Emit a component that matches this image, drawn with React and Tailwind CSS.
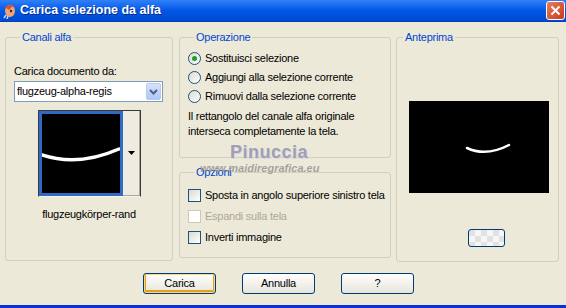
import React from 'react';

const Radio = ({ checked, label }) => (
  <div className="flex items-center h-[19px] gap-[4px]">
    <span className="w-[13px] h-[13px] rounded-full border border-[#1C5180] bg-gradient-to-br from-[#DCD9CF] to-white flex items-center justify-center">
      {checked && <span className="w-[5px] h-[5px] rounded-full bg-[#21A121]" />}
    </span>
    <span className="whitespace-nowrap">{label}</span>
  </div>
);

const Check = ({ label, disabled }) => (
  <div className="flex items-center h-[21px] gap-[4px]">
    <span
      className={`shrink-0 w-[13px] h-[13px] border ${
        disabled ? 'border-[#CAC8BB] bg-white' : 'border-[#1C5180] bg-gradient-to-br from-[#DCD9CF] to-white'
      }`}
    />
    <span className={`whitespace-nowrap ${disabled ? 'text-[#ACA899]' : ''}`}>{label}</span>
  </div>
);

const XpButton = ({ children, isDefault }) => (
  <button
    className={`h-[21px] w-[73px] rounded-[3px] border border-[#003C74] bg-gradient-to-b from-white to-[#E6E4DA] text-[11px] leading-none ${
      isDefault ? 'shadow-[inset_0_0_0_1px_#FBD590,inset_0_-1px_0_2px_#E5A01A]' : ''
    }`}
  >
    {children}
  </button>
);

const Group = ({ title, className, children }) => (
  <fieldset className={`min-w-0 shrink-0 border border-[#D0D0BF] rounded-[3px] ${className}`}>
    <legend className="ml-[6px] px-[2px] leading-[13px] text-[#0046D5]">{title}</legend>
    {children}
  </fieldset>
);

export default function App() {
  return (
    <div className="w-[566px] h-[308px] flex flex-col overflow-hidden text-[11px] tracking-[-0.25px] text-black font-['Liberation_Sans',Arial,sans-serif]">
      {/* title bar */}
      <div className="h-[22px] flex items-center bg-gradient-to-b from-[#2F80F8] via-[#0058E6] to-[#0049D0] border-b border-[#0040B8]">
        <svg width="16" height="16" viewBox="0 0 16 16" className="ml-[2px]">
          <ellipse cx="8" cy="8" rx="5" ry="6" fill="#F2A372" />
          <path d="M3 5 Q6 0 12 3 Q9 4 7 7 Q5 5 3 5Z" fill="#D9542B" />
          <circle cx="9" cy="8" r="1.2" fill="#3B2A1A" />
          <path d="M4 12 L2 15 M6 13 L5 16" stroke="#C9D7F0" strokeWidth="1.5" />
        </svg>
        <span className="ml-[2px] text-white font-bold text-[12.5px] tracking-[0px] [text-shadow:1px_1px_0_#0A2A8C]">
          Carica selezione da alfa
        </span>
        <div className="ml-auto mr-[1px] w-[19px] h-[19px] rounded-[3px] border border-white bg-gradient-to-br from-[#E97B5A] to-[#C8381A] flex items-center justify-center">
          <svg width="11" height="11" viewBox="0 0 11 11">
            <path d="M1.5 1.5 L9.5 9.5 M9.5 1.5 L1.5 9.5" stroke="white" strokeWidth="2" />
          </svg>
        </div>
      </div>

      {/* body */}
      <div className="flex-1 flex flex-col bg-[#ECE9D8] border-b-[3px] border-[#0831D9]">
        <div className="flex pt-[9px] pl-[5px]">
          <Group title="Canali alfa" className="w-[168px] h-[230px] px-[8px]">
            <div className="mt-[21px] leading-[13px]">Carica documento da:</div>
            <div className="mt-[3px] h-[21px] w-[149px] bg-white border border-[#7F9DB9] flex items-center">
              <span className="flex-1 pl-[2px]">flugzeug-alpha-regis</span>
              <span className="w-[15px] h-[17px] mr-[1px] rounded-[2px] border border-[#B9CBF3] bg-gradient-to-b from-[#D6E2FC] to-[#B0C6F7] flex items-center justify-center">
                <svg width="9" height="6" viewBox="0 0 9 6">
                  <path d="M1 1 L4.5 4.5 L8 1" stroke="#4D6185" strokeWidth="2" fill="none" />
                </svg>
              </span>
            </div>
            <div className="mt-[8px] ml-[24px] w-[103px] h-[87px] flex border border-[#3A3A3A] border-b-[#F4F3EE]">
              <div className="w-[84px] h-full border-[3px] border-[#316AC5] bg-black">
                <svg width="78" height="79" viewBox="0 0 78 79">
                  <path d="M0 41 Q36 53 77 35" stroke="white" strokeWidth="3.5" fill="none" strokeLinecap="round" />
                </svg>
              </div>
              <div className="flex-1 border-r border-b border-[#ACA899] bg-[#EEEBE0] flex items-center justify-center">
                <svg width="7" height="4" viewBox="0 0 7 4">
                  <path d="M0 0 L7 0 L3.5 4Z" fill="black" />
                </svg>
              </div>
            </div>
            <div className="mt-[11px] text-center leading-[13px]">flugzeugkörper-rand</div>
          </Group>

          <div className="relative ml-[6px] w-[212px] shrink-0 flex flex-col">
            <Group title="Operazione" className="w-[212px] h-[127px] px-[8px]">
              <div className="mt-[5px]">
                <Radio checked label="Sostituisci selezione" />
                <Radio label="Aggiungi alla selezione corrente" />
                <Radio label="Rimuovi dalla selezione corrente" />
              </div>
              <div className="mt-[3px] leading-[15px]">
                Il rettangolo del canale alfa originale
                <br />
                interseca completamente la tela.
              </div>
            </Group>
            <Group title="Opzioni" className="mt-[8px] w-[212px] h-[92px] px-[8px]">
              <div className="mt-[6px]">
                <Check label="Sposta in angolo superiore sinistro tela" />
                <Check disabled label="Espandi sulla tela" />
                <Check label="Inverti immagine" />
              </div>
            </Group>
            <div className="absolute left-[51px] top-[108px] text-[18px] tracking-[0.5px] font-bold text-[#8C8AA6]/75 [text-shadow:1px_1px_0_#D6D4E2]">
              Pinuccia
            </div>
            <div className="absolute left-[21px] top-[129px] text-[11px] tracking-[0px] font-semibold italic text-[#8A8A8A]/75">
              www.maidiregrafica.eu
            </div>
          </div>

          <Group title="Anteprima" className="ml-[5px] w-[163px] h-[231px]">
            <div className="mt-[57px] ml-[12px] w-[140px] h-[92px] bg-black">
              <svg width="140" height="92" viewBox="0 0 140 92">
                <path d="M58 47 Q77 56 100 44" stroke="white" strokeWidth="2.5" fill="none" strokeLinecap="round" />
              </svg>
            </div>
            <div className="mt-[36px] ml-[71px] w-[37px] h-[18px] rounded-[3px] border border-[#003C74] bg-[conic-gradient(#F6F6F6_25%,#E2E2E2_0_50%,#F6F6F6_0_75%,#E2E2E2_0)] bg-[length:12px_12px]" />
          </Group>
        </div>

        <div className="mt-[11px] pl-[143px] flex gap-[26px]">
          <XpButton isDefault>Carica</XpButton>
          <XpButton>Annulla</XpButton>
          <XpButton>?</XpButton>
        </div>
      </div>
    </div>
  );
}
